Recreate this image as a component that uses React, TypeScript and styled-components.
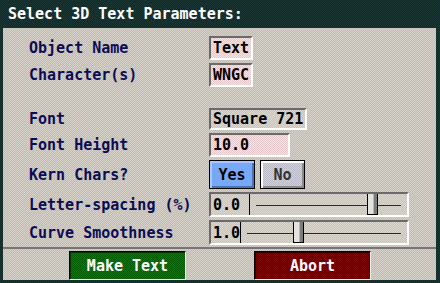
import styled, { createGlobalStyle } from "styled-components";

const dither = (a: string, b: string) =>
    `repeating-conic-gradient(${a} 0% 25%, ${b} 0% 50%) 0 0 / 2px 2px`;

const GlobalStyle = createGlobalStyle`
    html, body {
        margin: 0;
        padding: 0;
        background: #142a2a;
    }
    body {
        font-family: "DejaVu Sans Mono", "Liberation Mono", monospace;
        font-size: 15px;
        font-weight: bold;
    }
`;

const Window = styled.div`
    width: 440px;
    height: 283px;
    box-sizing: border-box;
    padding: 0 4px 3px 3px;
    background: ${dither("#0c2828", "#1e3836")};
    display: flex;
    flex-direction: column;
`;

const TitleBar = styled.div`
    height: 28px;
    flex: none;
    display: flex;
    align-items: center;
    padding-left: 5px;
    color: #ffffff;
`;

const Panel = styled.div`
    flex: 1;
    background: ${dither("#d6d2ca", "#bab9c6")};
    display: flex;
    flex-direction: column;
`;

const Form = styled.div`
    display: flex;
    flex-direction: column;
    gap: 3px;
    padding-top: 8px;
`;

const Row = styled.div<{ $h: number }>`
    height: ${(p) => p.$h}px;
    display: grid;
    grid-template-columns: 180px auto;
    align-items: center;
    padding-left: 26px;
`;

const Spacer = styled.div`
    height: 15px;
`;

const Label = styled.span`
    color: #0c0c52;
    white-space: nowrap;
`;

const Field = styled.div<{ $w: number; $pink?: boolean }>`
    width: ${(p) => p.$w}px;
    height: 100%;
    box-sizing: border-box;
    border: 2px solid;
    border-color: #6a6a6a #ffffff #ffffff #6a6a6a;
    background: ${(p) => (p.$pink ? dither("#f8e2e2", "#e6c8cc") : dither("#dcd8d0", "#c2c1cc"))};
    color: #000;
    padding-left: 2px;
    display: flex;
    align-items: center;
    overflow: hidden;
    white-space: nowrap;
`;

const Toggles = styled.div`
    display: flex;
    gap: 5px;
    height: 100%;
`;

const Toggle = styled.div<{ $on?: boolean }>`
    width: ${(p) => (p.$on ? 46 : 45)}px;
    height: 100%;
    box-sizing: border-box;
    border: 1px solid #000;
    display: flex;
    align-items: center;
    justify-content: center;
    color: ${(p) => (p.$on ? "#000" : "#333")};
    background: ${(p) => (p.$on ? "#78a8f8" : dither("#d6d2ca", "#bab9c6"))};
    box-shadow: ${(p) =>
        p.$on
            ? "inset 2px 2px 0 #a6c8ff, inset -2px -2px 0 #4a74b4"
            : "inset 2px 2px 0 #ffffff, inset -2px -2px 0 #8a8a8a"};
`;

const Slider = styled(Field)`
    padding-left: 0;
    align-items: stretch;
`;

const ValueCell = styled.div<{ $w: number }>`
    width: ${(p) => p.$w}px;
    flex: none;
    box-sizing: border-box;
    border-right: 1px solid #000;
    padding-left: 2px;
    overflow: hidden;
    display: flex;
    align-items: center;
`;

const Track = styled.div`
    flex: 1;
    position: relative;
    &::before {
        content: "";
        position: absolute;
        left: 6px;
        right: 6px;
        top: 50%;
        height: 1px;
        background: #2a2a2a;
    }
`;

const Thumb = styled.div`
    position: absolute;
    top: -1px;
    bottom: 0;
    width: 11px;
    box-sizing: border-box;
    border: 1px solid #000;
    background: linear-gradient(to right, #e4e2dc 0 5px, #b8b6b0 5px 6px, #7c7c7c 6px);
`;

const Separator = styled.div`
    margin-top: 2px;
    height: 2px;
    background: #767676;
`;

const ButtonBar = styled.div`
    display: flex;
    gap: 68px;
    padding: 2px 0 0 66px;
`;

const ActionButton = styled.div<{ $tone: "green" | "red" }>`
    width: 117px;
    height: 29px;
    box-sizing: border-box;
    border: 1px solid;
    border-color: #000 #f0f0f0 #f0f0f0 #000;
    background: ${(p) => (p.$tone === "green" ? dither("#0a7a0a", "#005c00") : dither("#7a0202", "#5e0000"))};
    box-shadow: inset 1px 1px 0 rgba(0, 0, 0, 0.5);
    color: #fff;
    display: flex;
    align-items: center;
    justify-content: center;
`;

export default function App() {
    const sliders = [
        { label: "Letter-spacing (%)", value: "0.0", cell: 39, left: 117 },
        { label: "Curve Smoothness", value: "1.0", cell: 30, left: 52 },
    ];

    return (
        <Window>
            <GlobalStyle />
            <TitleBar>Select 3D Text Parameters:</TitleBar>
            <Panel>
                <Form>
                    <Row $h={24}>
                        <Label>Object Name</Label>
                        <Field $w={44} $pink>Text</Field>
                    </Row>
                    <Row $h={24}>
                        <Label>Character(s)</Label>
                        <Field $w={44} $pink>WNGC</Field>
                    </Row>
                    <Spacer />
                    <Row $h={22}>
                        <Label>Font</Label>
                        <Field $w={98}>Square 721</Field>
                    </Row>
                    <Row $h={24}>
                        <Label>Font Height</Label>
                        <Field $w={81} $pink>10.0</Field>
                    </Row>
                    <Row $h={29}>
                        <Label>Kern Chars?</Label>
                        <Toggles>
                            <Toggle $on>Yes</Toggle>
                            <Toggle>No</Toggle>
                        </Toggles>
                    </Row>
                    {sliders.map((s) => (
                        <Row $h={25} key={s.label}>
                            <Label>{s.label}</Label>
                            <Slider $w={200}>
                                <ValueCell $w={s.cell}>{s.value}</ValueCell>
                                <Track>
                                    <Thumb style={{ left: s.left }} />
                                </Track>
                            </Slider>
                        </Row>
                    ))}
                </Form>
                <Separator />
                <ButtonBar>
                    <ActionButton $tone="green">Make Text</ActionButton>
                    <ActionButton $tone="red">Abort</ActionButton>
                </ButtonBar>
            </Panel>
        </Window>
    );
}
